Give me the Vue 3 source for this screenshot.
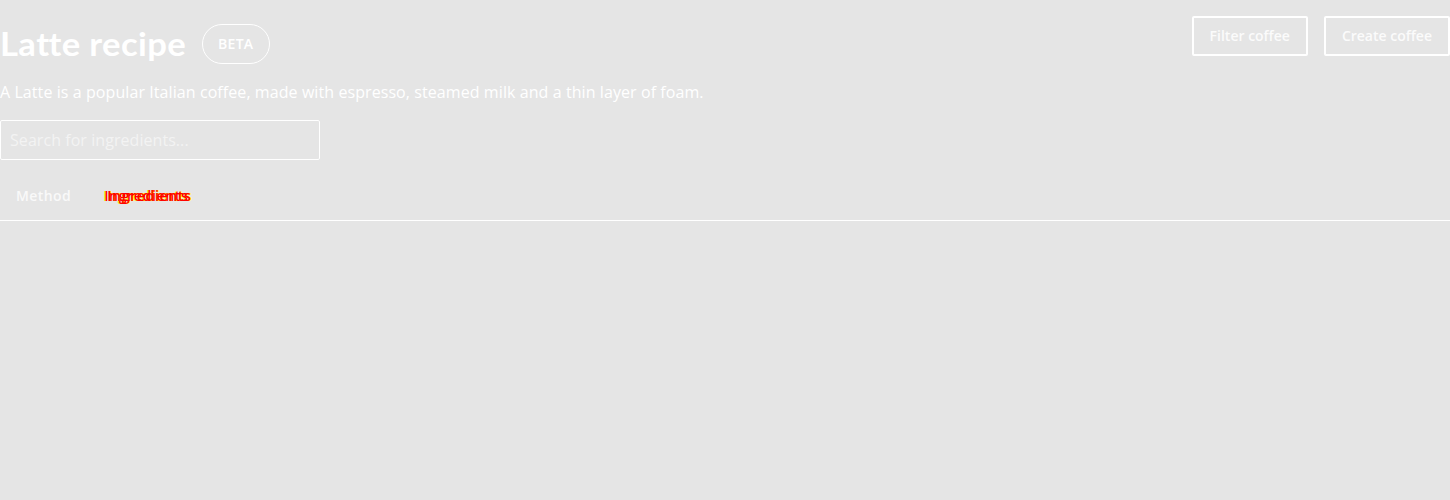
<script setup>
const actions = ['Filter coffee', 'Create coffee']
</script>

<template>
  <div class="page">
    <header class="header">
      <div class="heading">
        <h1 class="title">La<span class="joined">t</span>te recipe</h1>
        <span class="badge">BETA</span>
      </div>
      <div class="actions">
        <button v-for="a in actions" :key="a" class="action">{{ a }}</button>
      </div>
    </header>
    <p class="description">A Latte is a popular Italian coffee, made with espresso, steamed milk and a thin layer of foam.</p>
    <input class="search" type="text" placeholder="Search for ingredients..." />
    <nav class="tabs">
      <a class="tab">Method</a>
      <a class="tab changed">Ingredients</a>
    </nav>
  </div>
</template>

<style>
body {
  margin: 0;
  background: #e5e5e5;
}
</style>

<style scoped>
.page {
  box-sizing: border-box;
  height: 500px;
  padding-top: 16px;
  overflow: hidden;
  background: #e5e5e5;
  color: #fff;
  font-family: "Open Sans", sans-serif;
}
.header {
  display: flex;
  justify-content: space-between;
  align-items: flex-start;
}
.heading {
  display: flex;
  align-items: center;
  gap: 16px;
  padding-top: 8px;
}
.title {
  width: 186px;
  height: 40px;
  margin: 0;
  font: 700 33px/38px Lato, sans-serif;
  letter-spacing: 0.34px;
  white-space: nowrap;
  transform: scaleX(1.05);
  transform-origin: 0 0;
}
.joined {
  letter-spacing: -0.6px;
}
.badge {
  box-sizing: border-box;
  width: 68px;
  height: 40px;
  padding-left: 15px;
  border: 1px solid #fff;
  border-radius: 20px;
  font-size: 14px;
  font-weight: 600;
  line-height: 38px;
  letter-spacing: 0.3px;
}
.actions {
  display: flex;
  gap: 16px;
}
.action {
  box-sizing: border-box;
  height: 40px;
  padding: 0 16px;
  border: 2px solid #fff;
  border-radius: 2px;
  background: transparent;
  color: #fbfbfb;
  font: 600 14px/36px "Open Sans", sans-serif;
}
.description {
  margin: 16px 0;
  font-size: 16px;
  line-height: 24px;
  letter-spacing: 0.08px;
}
.search {
  display: block;
  box-sizing: border-box;
  width: 320px;
  height: 40px;
  padding: 0 9px;
  border: 1px solid #fff;
  border-radius: 2px;
  outline: none;
  background: transparent;
  color: #fff;
  font: 16px/24px "Open Sans", sans-serif;
  letter-spacing: 0.06px;
}
.search::placeholder {
  color: #f3f3f3;
  opacity: 1;
}
.tabs {
  display: flex;
  box-sizing: border-box;
  height: 49px;
  margin-top: 12px;
  border-bottom: 1px solid #fff;
}
.tab {
  padding: 0 16px;
  color: #f9f9f9;
  font-size: 14px;
  font-weight: 600;
  line-height: 48px;
  letter-spacing: 0.42px;
}
.changed {
  padding-left: 17px;
  color: #f00;
  letter-spacing: 0.66px;
  text-shadow: 3px 0 #f00, -1px 0 #ff0, 4px 0 #ff0;
}
</style>
